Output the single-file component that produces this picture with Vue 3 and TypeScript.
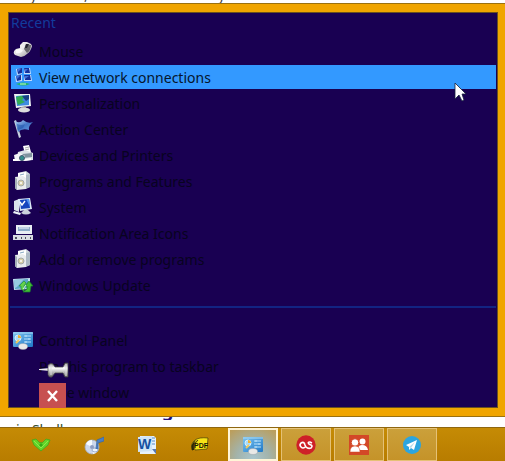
<script setup lang="ts">
type Entry = { label: string; icon: string }

const recent: Entry[] = [
  { label: 'Mouse', icon: 'mouse' },
  { label: 'View network connections', icon: 'network' },
  { label: 'Personalization', icon: 'personalize' },
  { label: 'Action Center', icon: 'flag' },
  { label: 'Devices and Printers', icon: 'printer' },
  { label: 'Programs and Features', icon: 'box' },
  { label: 'System', icon: 'system' },
  { label: 'Notification Area Icons', icon: 'tray' },
  { label: 'Add or remove programs', icon: 'box' },
  { label: 'Windows Update', icon: 'update' },
]
const active = 'View network connections'
</script>

<template>
  <svg class="defs" aria-hidden="true">
    <defs>
      <linearGradient id="silver" x1="0" y1="0" x2="1" y2="1">
        <stop offset="0" stop-color="#ffffff" /><stop offset=".55" stop-color="#dcdcdc" /><stop offset="1" stop-color="#8d8d92" />
      </linearGradient>
      <linearGradient id="pinmetal" x1="0" y1="0" x2="0" y2="1">
        <stop offset="0" stop-color="#777" /><stop offset=".35" stop-color="#fff" /><stop offset="1" stop-color="#666" />
      </linearGradient>
      <linearGradient id="sky" x1="0" y1="0" x2="1" y2="1">
        <stop offset="0" stop-color="#7cc4ef" /><stop offset="1" stop-color="#1f78c8" />
      </linearGradient>
      <linearGradient id="flagblue" x1="0" y1="0" x2="1" y2="1">
        <stop offset="0" stop-color="#b4d2f5" /><stop offset=".5" stop-color="#4276c8" /><stop offset="1" stop-color="#6aa0e4" />
      </linearGradient>
      <symbol id="mouse" viewBox="0 0 20 20">
        <path d="M7 4L10 1L14 1L18 3L19 5Q18 10 14 13Q11 16 8 16L2 14Q-1 11 3 8L7 7Z" fill="url(#silver)" />
        <path d="M13 3L18 4Q18 9 14 12L11 8Z" fill="#68686d" />
        <path d="M13 3L16 3L14 7L12 7Z" fill="#252530" />
        <path d="M8 4L12 2L11 7L7 9Z" fill="#efefef" />
        <path d="M3 9Q7 7 10 9Q8 13 3 12Z" fill="#fff" opacity=".8" />
      </symbol>
      <symbol id="network" viewBox="0 0 20 20">
        <path d="M3 2L9 1V7L4 8ZM11 1L17 1L18 7L11 7ZM2 9L9 8V14L3 15ZM11 8L18 8L19 14L11 14Z" fill="#c3dcfb" />
        <path d="M4 2L9 1V6L5 7ZM11 1H16L17 6H12ZM3 9L8 8V13L4 14ZM11 8H17L18 13H12Z" fill="#14309d" />
        <path d="M4 2L8 2L5 5ZM12 2H15L12 5ZM3 9L7 9L4 12ZM12 9H16L12 12Z" fill="#3e70dc" />
        <path d="M3 17Q10 14 17 17Q10 20 3 17" fill="#20b867" />
        <path d="M7 17H13" stroke="#8be3b4" stroke-width="1.5" />
      </symbol>
      <symbol id="personalize" viewBox="0 0 20 20">
        <path d="M1 1L17 1L18 13L3 15Z" fill="#edf3f4" />
        <path d="M3 3L16 2L16 12L4 13Z" fill="#3d8be0" />
        <path d="M3 4Q9 2 13 3L9 7L12 9L5 12L4 9Z" fill="#31ad55" />
        <path d="M9 3L16 2V6L13 8Z" fill="#164086" />
        <path d="M8 14L13 13V16L8 17Z" fill="#999" />
        <ellipse cx="11" cy="17" rx="6" ry="2.4" fill="#ddd" />
      </symbol>
      <symbol id="flag" viewBox="0 0 20 20">
        <path d="M1 2L3 1L8 18L6 19Z" fill="#c7d1df" />
        <path d="M2 2Q7 5 10 1Q15 5 20 3Q15 7 16 11Q9 9 5 13Z" fill="url(#flagblue)" />
        <path d="M4 5Q9 7 12 5L10 9L5 11Z" fill="#2659ae" opacity=".6" />
      </symbol>
      <symbol id="printer" viewBox="0 0 20 20">
        <path d="M10 1L16 0L18 7L12 9Z" fill="#fff" />
        <path d="M12 3L16 2M12 5L16 4" stroke="#aaa" />
        <path d="M5 7L12 5L20 8V15L10 16L4 13Z" fill="#dce2e8" />
        <path d="M9 9L19 8V12L10 13Z" fill="#80939f" />
        <path d="M1 10L7 8L12 11V16L2 16Z" fill="#f5f6f8" />
        <circle cx="9" cy="13" r="2.5" fill="#328e8b" stroke="#445a73" />
        <path d="M0 15H5M12 15L18 14" stroke="#fff" stroke-width="2" />
      </symbol>
      <symbol id="box" viewBox="0 0 20 20">
        <path d="M5 2L13 0L17 3V16L12 18L5 16Z" fill="#cfd7dc" />
        <path d="M5 2L13 1L13 15L5 16Z" fill="#fff" />
        <path d="M13 4L17 3V16L13 18Z" fill="#adb9c5" />
        <path d="M2 6L10 5L13 7V18L4 19L2 17Z" fill="#e9ecee" />
        <path d="M2 6L4 8V19L2 17Z" fill="#a6b1b8" />
        <circle cx="8" cy="12" r="3" fill="#d8cfa7" stroke="#a4a9a9" />
        <circle cx="8" cy="12" r="1" fill="#fff" />
        <path d="M7 4L11 3" stroke="#89a9c4" />
      </symbol>
      <symbol id="system" viewBox="0 0 20 20">
        <path d="M1 4L6 2V15L1 13Z" fill="#dae2e9" />
        <path d="M5 2L17 1L19 12L7 14Z" fill="#d9e7f6" />
        <path d="M7 3L16 2L17 11L8 12Z" fill="#1645bd" />
        <path d="M13 2L16 2L17 10Z" fill="#4f91f2" />
        <path d="M7 5L9 8L12 4" fill="none" stroke="#fff" stroke-width="1.4" />
        <path d="M11 13H15L18 16Q13 19 8 16Z" fill="#cbd2dc" />
        <path d="M1 14L8 16L7 18L0 16Z" fill="#edf2f8" />
      </symbol>
      <symbol id="tray" viewBox="0 0 20 20">
        <path d="M3 2H19V11H3Z" fill="#e8edf4" />
        <path d="M5 4H17V8H5Z" fill="#8cabc8" />
        <path d="M6 5H16" stroke="#f3f8ff" />
        <path d="M0 12H20V17H0Z" fill="#d8dbe2" />
        <path d="M2 14H4V16H2ZM8 14H9V16H8ZM12 14H13V16H12ZM17 14H18V16H17Z" fill="#4d5060" />
      </symbol>
      <symbol id="update" viewBox="0 0 20 20">
        <path d="M0 4L17 3V14L1 15Z" fill="#c1dff0" />
        <path d="M1 5L15 4V13L2 14Z" fill="#5aa5c8" />
        <path d="M1 5L11 4L4 12L2 13Z" fill="#98cbe0" />
        <path d="M6 11L11 6L13 8L11 11V16L8 14V11Z" fill="#63d24a" stroke="#24943a" stroke-width=".7" />
        <path d="M20 11L16 6L12 11H14V14L10 17H17L18 11Z" fill="#42bc35" stroke="#16802b" stroke-width=".7" />
        <path d="M10 14L13 10" stroke="#d9ffd0" />
      </symbol>
      <symbol id="panel" viewBox="0 0 20 20">
        <rect y="2" width="20" height="15" rx="1" fill="url(#sky)" />
        <path d="M0 3H20" stroke="#a9daf7" />
        <circle cx="5" cy="8" r="3" fill="#aadcf8" stroke="#d6f0ff" />
        <path d="M5 8V5A3 3 0 0 1 8 8Z" fill="#efb235" />
        <path d="M3 13L6 10" stroke="#f1c85b" stroke-width="2" />
        <path d="M11 6H18M11 9H18M11 12H18M13 5V7M16 8V10M13 11V13" stroke="#b9e2fb" />
        <ellipse cx="10" cy="16.5" rx="4.5" ry="3" fill="#e9e9e7" stroke="#9fa7ae" stroke-width=".5" />
      </symbol>
    </defs>
  </svg>

  <div class="screen">
    <div class="above"><span class="first">y</span><span class="second">,</span><span>y</span></div>

    <nav class="menu" aria-label="Recent">
      <div class="inner">
        <h2>Recent</h2>
        <ul>
          <li v-for="item in recent" :key="item.label">
            <button class="row" :class="{ selected: item.label === active }" type="button">
              <svg class="icon"><use :href="'#' + item.icon" /></svg>
              <span>{{ item.label }}</span>
            </button>
          </li>
        </ul>
        <hr>
        <ul class="commands">
          <li>
            <button class="row" type="button">
              <svg class="icon"><use href="#panel" /></svg><span>Control Panel</span>
            </button>
          </li>
          <li>
            <button class="row indented" type="button">
              <span>Pin this program to taskbar</span>
              <svg class="pin" viewBox="0 0 30 16">
                <path d="M0 7L11 6V9L0 8Z" fill="#eee" />
                <path d="M9 3Q12 0 14 2L16 5H24L26 1H29V15H26L24 11H16L13 15Q10 16 9 13Z" fill="url(#pinmetal)" stroke="#444" stroke-width=".7" />
                <path d="M27 2V14M12 3V13" stroke="#ddd" />
              </svg>
            </button>
          </li>
          <li>
            <button class="row indented" type="button">
              <span>Close window</span>
              <svg class="close" viewBox="0 0 27 25">
                <path d="M0 0H27V25H0Z" fill="#c75050" /><path d="M9 8L18 18M18 8L9 18" stroke="#fff" stroke-width="2.4" />
              </svg>
            </button>
          </li>
        </ul>
      </div>
      <svg class="cursor" viewBox="0 0 13 21">
        <path d="M1 1V17L5 13L8 19L10 18L8 12H12Z" fill="#fff" stroke="#17223c" stroke-width=".8" />
      </svg>
    </nav>

    <div class="below">
      <div class="heading-line"><span>g</span></div>
      <div class="body-line">in Shell</div>
    </div>

    <footer class="taskbar">
      <button type="button" aria-label="Downloads">
        <svg viewBox="0 0 20 20"><path d="M1 5L5 4L9 8L10 7L11 8L15 4L19 5L17 10L10 16L3 10Z" fill="#63d42a" stroke="#4aa51a" stroke-width=".8" /><path d="M3 6L10 13L17 6" fill="none" stroke="#8cec48" /><path d="M8 10L10 8L12 10L10 12Z" fill="#36a914" /></svg>
      </button>
      <button type="button" aria-label="Music">
        <svg viewBox="0 0 20 20"><circle cx="8" cy="12" r="7" fill="#cbd7ec" stroke="#a5aec5" stroke-width=".8" /><path d="M8 12L2 9A7 7 0 0 1 8 5ZM8 12L14 15A7 7 0 0 1 9 19Z" fill="#f7fbff" /><circle cx="8" cy="12" r="2" fill="#8d9dc4" /><ellipse cx="11" cy="15" rx="3" ry="2" fill="#f0f5fc" stroke="#748bb6" stroke-width=".7" /><path d="M12 14L13 5L20 2V6L14 8V14" fill="#4c7fc2" stroke="#3566a6" stroke-width=".7" /></svg>
      </button>
      <button type="button" aria-label="Word">
        <svg viewBox="0 0 20 20"><path d="M3 1H17L19 3V19H3Z" fill="#e7f2fc" /><path d="M1 2L15 1V16L1 17Z" fill="#cfe4f6" /><path d="M15 3H18M15 6H18M15 9H18" stroke="#588bc5" /><path d="M15 14H19V19Z" fill="#5878ae" /><text x="1" y="14" class="word">W</text></svg>
      </button>
      <button type="button" aria-label="PDF">
        <svg viewBox="0 0 20 20"><path d="M2 15Q0 9 5 5Q9 2 18 3L17 14L5 15Q3 10 8 5Q3 8 3 15Z" fill="#f7e316" stroke="#453e09" stroke-width=".7" /><path d="M2 15Q0 9 6 5Q3 9 4 15Z" fill="#292509" /><text x="4" y="13" class="pdf">PDF</text></svg>
      </button>
      <button class="current" type="button" aria-label="Control Panel"><svg><use href="#panel" /></svg></button>
      <button class="open" type="button" aria-label="Last.fm">
        <svg viewBox="0 0 20 20"><circle cx="10" cy="10" r="9.7" fill="#ce2028" /><path d="M9 12Q7 14 5 12Q3 10 5 8Q8 6 9 10L10 12Q12 14 15 13Q17 11 15 10L13 9Q11 7 14 7L16 8" fill="none" stroke="#fff" stroke-width="1.6" /></svg>
      </button>
      <button class="open" type="button" aria-label="People">
        <svg viewBox="0 0 20 20"><path d="M0 0H20V20H0Z" fill="#d34827" /><circle cx="13.5" cy="6.5" r="3" fill="#fff" /><path d="M9 13Q10 10 13 10Q18 10 19 15H11Z" fill="#fff" /><circle cx="6" cy="7.5" r="3.8" fill="#fff" stroke="#d34827" /><path d="M1 17Q1 11 6 11Q11 11 11 17Z" fill="#fff" stroke="#d34827" stroke-width=".5" /></svg>
      </button>
      <button class="open" type="button" aria-label="Telegram">
        <svg viewBox="0 0 20 20"><circle cx="10" cy="10" r="9" fill="#2ca5df" /><path d="M4 10L15 5L12 15L9 13L7 15V12Z" fill="#fff" /><path d="M7 12L13 7L9 13Z" fill="#b9dcea" /></svg>
      </button>
    </footer>
  </div>
</template>

<style>
body { background: #fff; }
</style>

<style scoped>
* { box-sizing: border-box; }
.defs { position: absolute; width: 0; height: 0; }
.screen { display: flex; flex-direction: column; min-height: 100vh; font-family: "Noto Sans", "Open Sans", sans-serif; font-size: 14px; overflow: hidden; }
.above { display: flex; align-items: flex-end; height: 3px; overflow: hidden; padding-left: 30px; line-height: 16px; color: #444; }
.above .first { width: 54px; }
.above .second { width: 134px; }
.menu { position: relative; padding: 8px 7px 8px 8px; background: #f0a500; border: 1px solid #9a7110; border-left-width: 0; border-right-width: 0; }
.inner { background: #190052; border: 1px solid #69501f; padding: 0 1px 3px; }
h2 { margin: 0; padding-left: 1px; font-size: 14px; font-weight: 400; line-height: 20px; color: #123b9c; }
ul { list-style: none; margin: 0; padding: 6px 0 0 1px; display: flex; flex-direction: column; gap: 2px; }
.commands { padding-top: 20px; }
.row { position: relative; display: flex; align-items: center; gap: 6px; width: 100%; height: 24px; padding: 0 2px; border: 0; background: transparent; font: inherit; line-height: 24px; color: #080320; text-align: left; }
.row span { padding-top: 2px; }
.row.selected { background: #3399ff; color: #05152c; }
.row.indented { padding-left: 28px; }
.icon { width: 20px; height: 20px; flex: none; }
.pin { position: absolute; left: 28px; top: 8px; width: 30px; height: 16px; }
.close { position: absolute; left: 28px; top: 3px; width: 27px; height: 25px; }
hr { height: 2px; margin: 9px 0 0; border: 0; background: #122482; }
.cursor { position: absolute; right: 38px; top: 78px; width: 13px; height: 21px; }
.below { display: flex; flex-direction: column; justify-content: space-between; height: 10px; }
.heading-line { display: flex; align-items: flex-end; height: 3px; overflow: hidden; padding-left: 162px; font-size: 18px; font-weight: 700; line-height: 20px; color: #23107b; }
.body-line { height: 4px; overflow: hidden; padding-left: 16px; line-height: 14px; color: #37502d; }
.taskbar { display: flex; gap: 3px; flex: 1; min-height: 34px; padding-left: 16px; background: linear-gradient(#c58b05, #b87c00); border-top: 1px solid #8f6710; }
.taskbar button { display: flex; align-items: center; justify-content: center; width: 50px; height: 33px; padding: 0; border: 1px solid transparent; background: transparent; }
.taskbar svg { width: 20px; height: 20px; }
.taskbar .open { background: linear-gradient(#cba03a, #c59329); border-color: #e5c176; }
.taskbar .current { background: radial-gradient(circle at 50% 100%, #a8c5ce, #a3b3aa 45%, #bd9c55); border: 2px solid #fff5d7; }
.word { font: bold 14px "Liberation Sans", sans-serif; fill: #1550a2; }
.pdf { font: bold 7px "Liberation Sans", sans-serif; fill: #171604; }
</style>
